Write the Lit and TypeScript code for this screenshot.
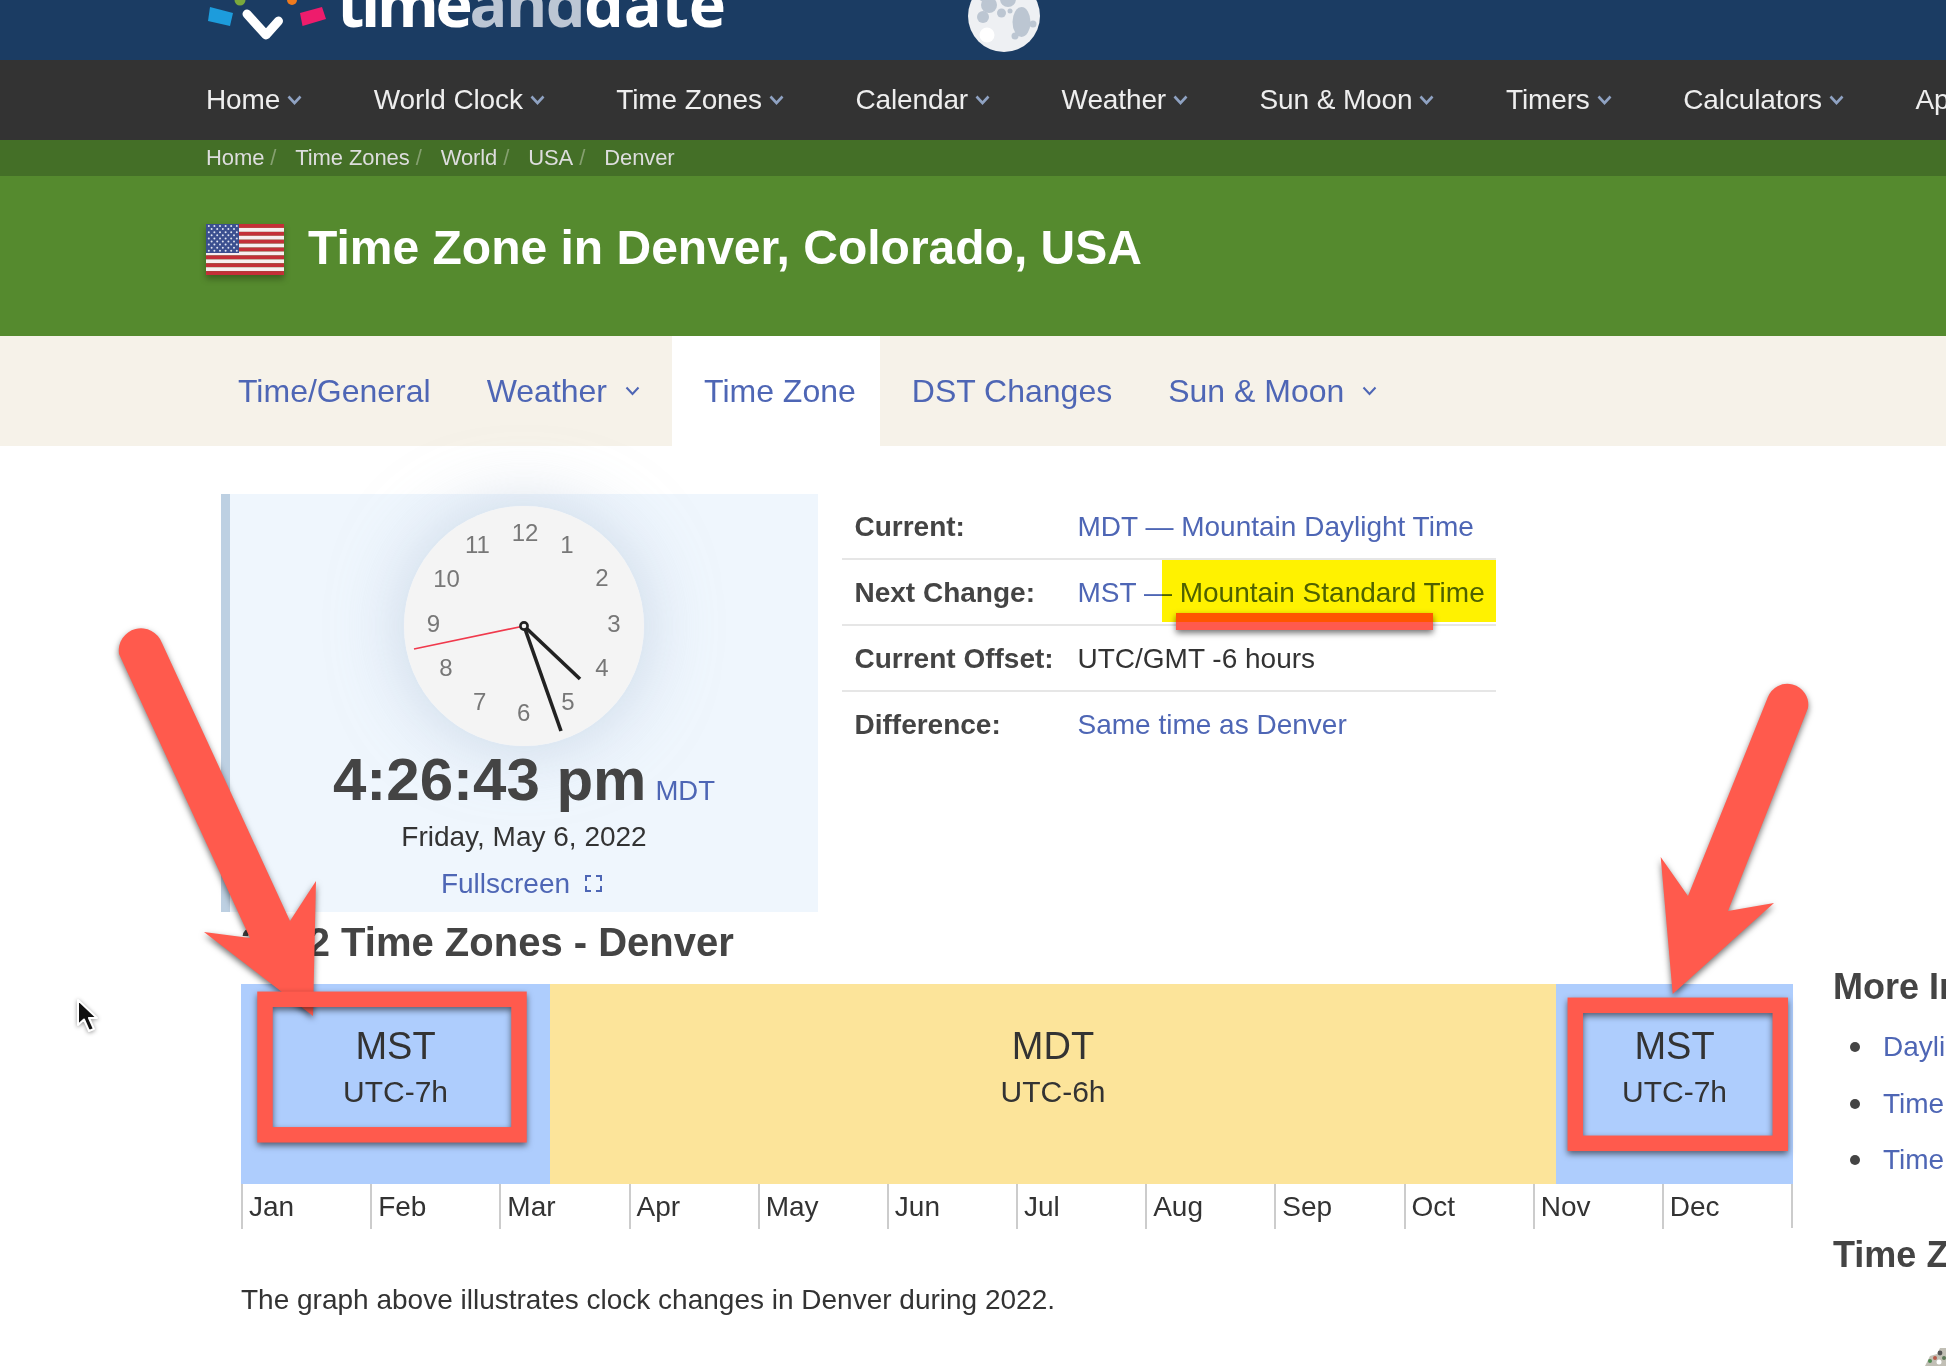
import { LitElement, html, css, svg } from "lit";
import { customElement } from "lit/decorators.js";

const NAV = ["Home", "World Clock", "Time Zones", "Calendar", "Weather", "Sun & Moon", "Timers", "Calculators", "Apps"];
const CRUMBS = ["Home", "Time Zones", "World", "USA", "Denver"];
const MONTHS = ["Jan", "Feb", "Mar", "Apr", "May", "Jun", "Jul", "Aug", "Sep", "Oct", "Nov", "Dec"];
const NUMS: [string, number, number][] = [
  ["12", 121, 27], ["11", 73.5, 39], ["1", 163, 39], ["10", 42.5, 73], ["2", 198, 72], ["9", 29.5, 118],
  ["3", 210, 118], ["8", 42, 162], ["4", 198, 162], ["7", 75.6, 196], ["5", 164, 196], ["6", 119.7, 207],
];

@customElement("app-root")
export class AppRoot extends LitElement {
  static styles = css`
    :host { display: block; position: relative; width: 1946px; height: 1366px; overflow: hidden; background: #fff;
      font-family: "Liberation Sans", Arial, sans-serif; font-size: 28px; color: #333; }
    a, .link { color: #4e66b5; text-decoration: none; }
    .top { display: flex; height: 60px; padding-left: 206px; background: #1b3c63; overflow: hidden; }
    .logo-icon { flex: none; }
    .logo-text { margin: -37px 0 0 11px; height: 80px; line-height: 80px; font-family: "Open Sans", sans-serif; font-weight: 700;
      font-size: 63px; color: #fff; white-space: nowrap; flex: none; width: 631px; }
    .logo-time { letter-spacing: -3.3px; }
    .logo-and { color: #bcc6d4; letter-spacing: -1.6px; }
    .logo-date { letter-spacing: -0.2px; }
    .moon { flex: none; margin-top: -20px; }
    .nav { display: flex; height: 80px; padding-left: 206px; gap: 71.5px; background: #333; color: #eee; font-size: 28px; align-items: center; white-space: nowrap; letter-spacing: -0.12px; }
    .nav-item { display: flex; align-items: center; gap: 7px; flex: none; }
    .crumbs { display: flex; height: 36px; padding-left: 206px; background: #446f27; color: #ddd; font-size: 22px; align-items: center; white-space: nowrap; letter-spacing: -0.1px; }
    .crumb { margin-right: 6px; }
    .sep { color: #86a070; margin-right: 19px; }
    .band { display: flex; height: 112px; padding: 48px 0 0 206px; gap: 24px; background: #558a2e; }
    .flag { flex: none; filter: drop-shadow(0 4px 3px rgba(0,0,0,.3)); }
    h1 { margin: 0; font-size: 48px; line-height: 48px; font-weight: 700; color: #fff; white-space: nowrap; }
    .tabs { display: flex; height: 110px; background: #f6f2e9; padding-left: 210px; font-size: 32px; align-items: stretch; white-space: nowrap; }
    .tab { display: flex; align-items: center; padding: 0 28px; color: #4e66b5; gap: 18px; }
    .tab.has-menu { padding-right: 32px; }
    .tab.active { background: #fff; padding: 0 24px 0 32px; }
    .tab.after { padding-left: 32px; }
    .main { display: flex; padding: 48px 0 0 221px; }
    .left { flex: none; width: 1612px; }
    .top-row { display: flex; align-items: flex-start; gap: 24px; }
    .clock-box { box-sizing: border-box; width: 597px; height: 418px; border-left: 9px solid #bdd0e2; background: #eff6fd; padding-top: 12px; text-align: center; }
    .face { width: 240px; height: 240px; margin: 0 auto; border-radius: 50%; box-shadow: 0 0 70px rgba(170,188,212,.55); }
    .face svg { display: block; }
    .time { display: flex; justify-content: center; align-items: baseline; gap: 9px; line-height: 68px; white-space: nowrap; }
    .time b { font-size: 60px; color: #444; }
    .time .link { font-size: 27.5px; line-height: 28px; }
    .date { line-height: 45px; }
    .full { display: flex; justify-content: center; align-items: center; gap: 15px; line-height: 49px; padding-right: 5px; color: #4e66b5; }
    .facts { flex: none; width: 654px; }
    .fact { display: grid; grid-template-columns: 223px 1fr; box-sizing: border-box; height: 66px; padding: 1px 0 0 12.5px; align-items: center; border-bottom: 2px solid #e6e6e6; white-space: nowrap; }
    .fact:last-child { border-bottom: 0; padding: 0 0 1px 12.5px; }
    .fact b { color: #444; }
    .h2 { margin: 6px 0 18px 20px; font-size: 40px; line-height: 48px; font-weight: 700; color: #444; }
    .chart { margin-left: 20px; width: 1552px; }
    .bar { display: flex; height: 200px; text-align: center; }
    .seg { padding-top: 39px; box-sizing: border-box; line-height: 46px; font-size: 30px; }
    .seg div { font-size: 38px; }
    .blue { background: #aecdfd; }
    .yellow { background: #fce49a; }
    .months { display: grid; grid-template-columns: repeat(12, 1fr); height: 44px; line-height: 45px; border-right: 2px solid #ccc; box-sizing: border-box; }
    .month { border-left: 2px solid #ccc; padding-left: 6px; }
    .note { margin: 52px 0 0 20px; line-height: 40px; }
    .aside { flex: none; width: 113px; white-space: nowrap; overflow: hidden; padding-top: 470.5px; height: 420px; }
    .aside h2 { margin: 0; font-size: 36px; line-height: 44px; font-weight: 700; color: #444; }
    .aside ul { list-style: none; margin: 10.5px 0 44px; padding: 0; }
    .aside li { display: flex; align-items: center; height: 56.5px; gap: 23px; padding-left: 17px; color: #4e66b5; }
    .aside li::before { content: ""; flex: none; width: 10px; height: 10px; border-radius: 50%; background: #444; }
    .thumb { display: block; margin: 71.5px 0 0 92px; }
    .marks { position: absolute; left: 0; top: 0; pointer-events: none; }
    .marks .sh { filter: drop-shadow(0 3px 3px rgba(0,0,0,.55)); }
    .hilite { position: absolute; left: 1162px; top: 560px; width: 334px; height: 62px; background: #fff200; mix-blend-mode: multiply; }
  `;

  private chevron(color: string, w = 15, sw = 2.6) {
    return html`<svg width=${w} height="10" viewBox="0 0 15 10" fill="none"><path d="M1.5 1.5 7.5 8 13.5 1.5" stroke=${color} stroke-width=${sw}/></svg>`;
  }

  private flag() {
    const stripes = Array.from({ length: 13 }, (_, i) =>
      svg`<rect x="0" y=${i * 3.93} width="78" height="3.93" fill=${i % 2 ? "#f7eef0" : "#c42f38"}/>`);
    const stars = [];
    for (let r = 0; r < 9; r++) {
      for (let c = 0; c < (r % 2 ? 5 : 6); c++) {
        stars.push(svg`<circle cx=${(r % 2 ? 5.6 : 2.8) + c * 5.6} cy=${2 + r * 3.1} r="1" fill="#dfe3f0"/>`);
      }
    }
    return html`<svg class="flag" width="78" height="51" viewBox="0 0 78 51">${stripes}<rect width="33" height="29" fill="#3b4f8f"/>${stars}</svg>`;
  }

  render() {
    return html`
      <div class="top">
        <svg class="logo-icon" width="120" height="60" viewBox="206 0 120 60">
          <polygon points="210,7 233,13 230,26 208,21" fill="#1d9cdc"/>
          <polygon points="300,13 322,7 326,19 302.5,26" fill="#ee1c6c"/>
          <circle cx="240" cy="0" r="5.5" fill="#7aa83c"/>
          <circle cx="292" cy="0" r="5" fill="#ee7a1e"/>
          <path d="M247 14 266 35 278.5 21" fill="none" stroke="#fff" stroke-width="9" stroke-linecap="round" stroke-linejoin="round"/>
        </svg>
        <div class="logo-text"><span class="logo-time">time</span><span class="logo-and">and</span><span class="logo-date">date</span></div>
        <svg class="moon" width="72" height="72" viewBox="968 -20 72 72">
          <circle cx="1004" cy="16" r="36" fill="#eef0f3"/>
          <g fill="#bcc6d2">
            <ellipse cx="1021.5" cy="22" rx="9" ry="15"/><circle cx="1033" cy="24" r="3.5"/><circle cx="1015" cy="36" r="3.5"/>
            <circle cx="1001.5" cy="13" r="4.5"/><circle cx="1010" cy="11" r="2.5"/><circle cx="983" cy="17" r="6"/>
            <circle cx="989" cy="5" r="8"/><circle cx="1008" cy="-1" r="8"/><circle cx="985" cy="-6" r="8"/>
          </g>
          <circle cx="987" cy="35" r="7.5" fill="#fff"/>
        </svg>
      </div>
      <div class="nav">
        ${NAV.map(n => html`<div class="nav-item">${n}${this.chevron("#8fa2c2")}</div>`)}
      </div>
      <div class="crumbs">
        ${CRUMBS.map((c, i) => html`<span class="crumb">${c}</span>${i < CRUMBS.length - 1 ? html`<span class="sep">/</span>` : ""}`)}
      </div>
      <div class="band">${this.flag()}<h1>Time Zone in Denver, Colorado, USA</h1></div>
      <div class="tabs">
        <div class="tab">Time/General</div>
        <div class="tab has-menu">Weather${this.chevron("#4e66b5", 15, 2)}</div>
        <div class="tab active">Time Zone</div>
        <div class="tab after">DST Changes</div>
        <div class="tab">Sun &amp; Moon${this.chevron("#4e66b5", 15, 2)}</div>
      </div>
      <div class="main">
        <div class="left">
          <div class="top-row">
            <div class="clock-box">
              <div class="face">
                <svg width="240" height="240" viewBox="0 0 240 240">
                  <circle cx="120" cy="120" r="120" fill="#f4f4f4"/>
                  ${NUMS.map(([t, x, y]) => svg`<text x=${x} y=${y + 8} text-anchor="middle" font-size="24" fill="#777">${t}</text>`)}
                  <line x1="120" y1="120" x2="10" y2="143" stroke="#f0394c" stroke-width="1.6"/>
                  <line x1="120" y1="120" x2="176" y2="173" stroke="#222" stroke-width="3.6"/>
                  <line x1="120" y1="120" x2="157" y2="225" stroke="#222" stroke-width="3.6"/>
                  <circle cx="120" cy="120" r="3.6" fill="#f4f4f4" stroke="#222" stroke-width="2.6"/>
                </svg>
              </div>
              <div class="time"><b>4:26:43 pm</b><a class="link">MDT</a></div>
              <div class="date">Friday, May 6, 2022</div>
              <div class="full">Fullscreen
                <svg width="17" height="17" viewBox="0 0 17 17" fill="none" stroke="#4e66b5" stroke-width="2">
                  <path d="M1 6V1H6M11 1H16V6M16 11V16H11M6 16H1V11"/>
                </svg>
              </div>
            </div>
            <div class="facts">
              <div class="fact"><b>Current:</b><a class="link">MDT — Mountain Daylight Time</a></div>
              <div class="fact"><b>Next Change:</b><a class="link">MST — Mountain Standard Time</a></div>
              <div class="fact"><b>Current Offset:</b><span>UTC/GMT -6 hours</span></div>
              <div class="fact"><b>Difference:</b><a class="link">Same time as Denver</a></div>
            </div>
          </div>
          <div class="h2">2022 Time Zones - Denver</div>
          <div class="chart">
            <div class="bar">
              <div class="seg blue" style="width:309px"><div>MST</div>UTC-7h</div>
              <div class="seg yellow" style="width:1006px"><div>MDT</div>UTC-6h</div>
              <div class="seg blue" style="width:237px"><div>MST</div>UTC-7h</div>
            </div>
            <div class="months">${MONTHS.map(m => html`<div class="month">${m}</div>`)}</div>
          </div>
          <div class="note">The graph above illustrates clock changes in Denver during 2022.</div>
        </div>
        <div class="aside">
          <h2>More Information</h2>
          <ul>
            <li>Daylight Saving Time</li>
            <li>Time Zones Today</li>
            <li>Time Zone Map</li>
          </ul>
          <h2>Time Zone News</h2>
          <svg class="thumb" width="21" height="18" viewBox="0 0 21 18">
            <path d="M0 18 5 8 12 6 15 0 21 0 21 18Z" fill="#8e8a78" opacity=".55"/>
            <circle cx="5" cy="13" r="2" fill="#4d8a50"/><circle cx="10" cy="10" r="2" fill="#b65a4a"/>
            <circle cx="15" cy="5" r="2.4" fill="#555"/><circle cx="14" cy="14" r="2.5" fill="#fff"/>
            <circle cx="19" cy="10" r="2" fill="#5c7a58"/>
          </svg>
        </div>
      </div>
      <svg class="marks" width="1946" height="1366" viewBox="0 0 1946 1366">
        <g fill="#ff5a4d">
          <path class="sh" d="M162 643 290 921 316 881 313 1016 204 932 250 938 119 654A22.3 22.3 0 0 1 162 643Z"/>
          <path class="sh" d="M1767.7 697.6 1688 896 1660.7 857 1672.7 994 1774 903 1728 911 1808 708A20.9 20.9 0 0 0 1767.7 697.6Z"/>
          <rect class="sh" x="1176" y="613" width="257" height="17"/>
        </g>
        <g fill="none" stroke="#ff5a4d" stroke-width="15.5">
          <rect class="sh" x="265" y="999.3" width="254" height="135.5"/>
          <rect class="sh" x="1575.3" y="1005.3" width="205" height="138"/>
        </g>
        <path d="M78 1000V1025L84 1019.5 89 1031 94 1029 89 1018H97Z" fill="#111" stroke="#fff" stroke-width="2" stroke-linejoin="round" style="filter:drop-shadow(0 1px 2px rgba(0,0,0,.4))"/>
      </svg>
      <div class="hilite"></div>
    `;
  }
}
